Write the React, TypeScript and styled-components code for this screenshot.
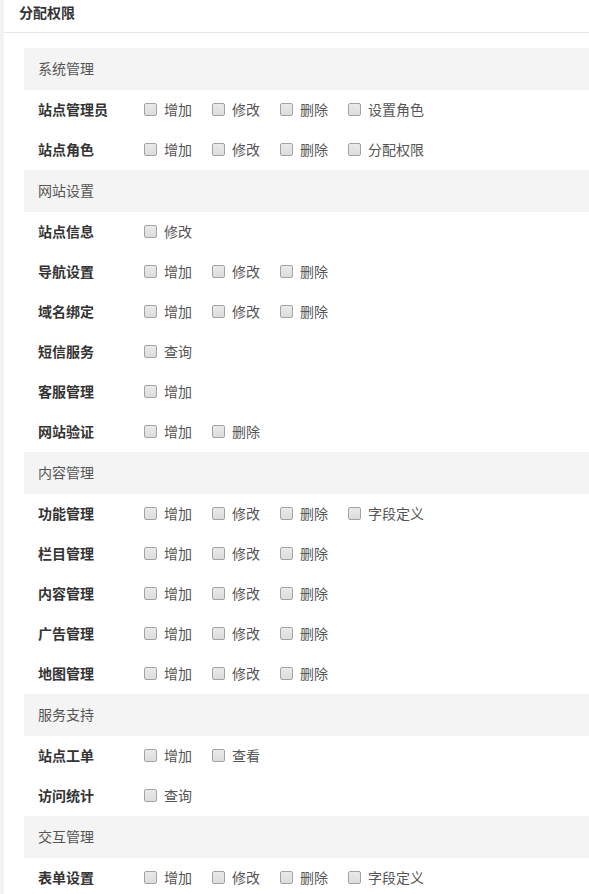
import React from 'react';
import styled, { createGlobalStyle } from 'styled-components';

type Item = { name: string; ops: string[] };
type Group = { title: string; items: Item[] };

const groups: Group[] = [
    {
        title: '系统管理',
        items: [
            { name: '站点管理员', ops: ['增加', '修改', '删除', '设置角色'] },
            { name: '站点角色', ops: ['增加', '修改', '删除', '分配权限'] },
        ],
    },
    {
        title: '网站设置',
        items: [
            { name: '站点信息', ops: ['修改'] },
            { name: '导航设置', ops: ['增加', '修改', '删除'] },
            { name: '域名绑定', ops: ['增加', '修改', '删除'] },
            { name: '短信服务', ops: ['查询'] },
            { name: '客服管理', ops: ['增加'] },
            { name: '网站验证', ops: ['增加', '删除'] },
        ],
    },
    {
        title: '内容管理',
        items: [
            { name: '功能管理', ops: ['增加', '修改', '删除', '字段定义'] },
            { name: '栏目管理', ops: ['增加', '修改', '删除'] },
            { name: '内容管理', ops: ['增加', '修改', '删除'] },
            { name: '广告管理', ops: ['增加', '修改', '删除'] },
            { name: '地图管理', ops: ['增加', '修改', '删除'] },
        ],
    },
    {
        title: '服务支持',
        items: [
            { name: '站点工单', ops: ['增加', '查看'] },
            { name: '访问统计', ops: ['查询'] },
        ],
    },
    {
        title: '交互管理',
        items: [{ name: '表单设置', ops: ['增加', '修改', '删除', '字段定义'] }],
    },
];

const App = () => {
    return (
        <>
            <GlobalStyle />
            <Page>
                <Panel>
                    <PanelTitle>分配权限</PanelTitle>
                    <PanelBody>
                        {groups.map((g) => (
                            <section key={g.title}>
                                <GroupHead>{g.title}</GroupHead>
                                {g.items.map((it) => (
                                    <Row key={it.name}>
                                        <RowLabel>{it.name}</RowLabel>
                                        {it.ops.map((op) => (
                                            <Option key={op}>
                                                <Box />
                                                <span>{op}</span>
                                            </Option>
                                        ))}
                                    </Row>
                                ))}
                            </section>
                        ))}
                    </PanelBody>
                </Panel>
            </Page>
        </>
    );
};
export default App;

const GlobalStyle = createGlobalStyle`
    html, body {
        margin: 0;
        padding: 0;
        background: #f2f2f2;
    }
    body {
        font-family: "Noto Sans CJK SC", "Microsoft YaHei", sans-serif;
        font-size: 14px;
        color: #555;
    }
`;

const Page = styled.div`
    padding-left: 4px;
    height: 894px;
    overflow: hidden;
`;

const Panel = styled.div`
    background: #fff;
    min-height: 894px;
`;

const PanelTitle = styled.div`
    height: 32px;
    line-height: 25px;
    padding-left: 15px;
    font-size: 14px;
    font-weight: 700;
    color: #333;
    border-bottom: 1px solid #e6e8ec;
`;

const PanelBody = styled.div`
    padding: 15px 0 0 20px;
`;

const GroupHead = styled.div`
    height: 42px;
    line-height: 40px;
    background: #f4f4f4;
    padding-left: 14px;
    color: #555;
    font-size: 14px;
`;

const Row = styled.div`
    display: flex;
    align-items: center;
    box-sizing: border-box;
    height: 40px;
    padding: 0 0 2px 14px;
`;

const RowLabel = styled.div`
    width: 106px;
    font-weight: 700;
    color: #333;
`;

const Option = styled.label`
    display: flex;
    align-items: center;
    margin-right: 20px;
    color: #555;
    span {
        line-height: 20px;
    }
`;

const Box = styled.i`
    display: inline-block;
    width: 11px;
    height: 11px;
    margin: 1px 7px 0 0;
    border: 1px solid #a3a3a3;
    border-radius: 2px;
    background: linear-gradient(#eaeaea, #dcdcdc);
`;
